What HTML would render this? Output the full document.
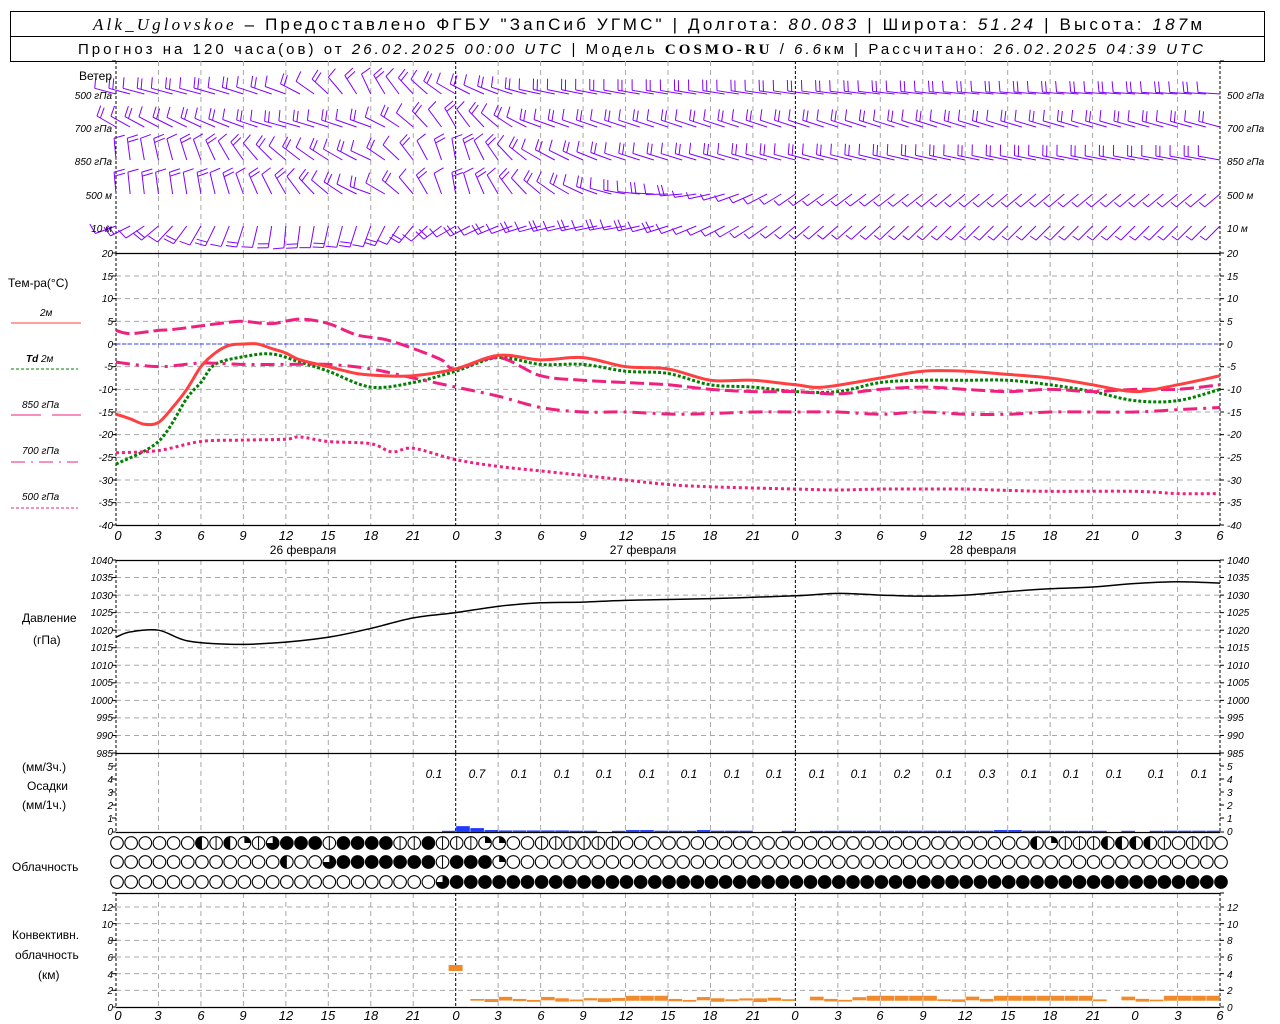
<!DOCTYPE html>
<html><head><meta charset="utf-8">
<style>
html,body{margin:0;padding:0;background:#fff;width:1280px;height:1024px;overflow:hidden}
svg{display:block}
text{font-family:"Liberation Sans",sans-serif;fill:#000}
.t{font-size:10px;font-style:italic}
.l{font-size:12px}
.e{text-anchor:end}
.m{text-anchor:middle}
.h{font-size:13px;font-style:italic;text-anchor:middle}
</style></head><body>
<svg id="s" width="1280" height="1024" viewBox="0 0 1280 1024" xmlns="http://www.w3.org/2000/svg">
<rect x="10.5" y="11.5" width="1254" height="50" fill="none" stroke="#000"/>
<line x1="10" y1="36.5" x2="1265" y2="36.5" stroke="#000"/>
<text x="93" y="30" font-size="17" textLength="1109" lengthAdjust="spacing"><tspan font-family="Liberation Serif" font-style="italic">Alk_Uglovskoe</tspan> – Предоставлено ФГБУ "ЗапСиб УГМС" | Долгота: <tspan font-style="italic">80.083</tspan> | Широта: <tspan font-style="italic">51.24</tspan> | Высота: <tspan font-style="italic">187</tspan>м</text>
<text x="78" y="54" font-size="15" textLength="1125" lengthAdjust="spacing">Прогноз на 120 часа(ов) от <tspan font-style="italic">26.02.2025 00:00 UTC</tspan>  | Модель <tspan font-family="Liberation Serif" font-weight="bold">COSMO-RU</tspan> / <tspan font-style="italic">6.6</tspan>км | Рассчитано: <tspan font-style="italic">26.02.2025 04:39 UTC</tspan></text>

<g id="g"></g>

<text class="l e" x="112" y="80">Ветер</text>
<text class="t e" x="112" y="99">500 гПа</text>
<text class="t e" x="112" y="132">700 гПа</text>
<text class="t e" x="112" y="165">850 гПа</text>
<text class="t e" x="112" y="199">500 м</text>
<text class="t e" x="112" y="232">10  м</text>
<text class="t" x="1227" y="99">500 гПа</text>
<text class="t" x="1227" y="132">700 гПа</text>
<text class="t" x="1227" y="165">850 гПа</text>
<text class="t" x="1227" y="199">500 м</text>
<text class="t" x="1227" y="232">10  м</text>

<text class="l" x="8" y="287">Тем-ра(°С)</text>
<text class="t" x="40" y="316" font-style="normal">2м</text>
<line x1="11" y1="323" x2="81" y2="323" stroke="#ff4040"/>
<text class="t" x="26" y="362"><tspan font-weight="bold">Td</tspan>  2м</text>
<line x1="11" y1="369" x2="78" y2="369" stroke="#008000" stroke-dasharray="3,2"/>
<text class="t" x="22" y="408">850 гПа</text>
<line x1="11" y1="415" x2="41" y2="415" stroke="#f0207f"/><line x1="52" y1="415" x2="81" y2="415" stroke="#f0207f"/>
<text class="t" x="22" y="454">700 гПа</text>
<line x1="11" y1="462" x2="78" y2="462" stroke="#f0207f" stroke-dasharray="14,6,2,6"/>
<text class="t" x="22" y="500">500 гПа</text>
<line x1="11" y1="508" x2="78" y2="508" stroke="#f0207f" stroke-dasharray="3,2"/>

<text class="t e" x="113" y="257">20</text><text class="t e" x="113" y="280">15</text><text class="t e" x="113" y="302">10</text><text class="t e" x="113" y="325">5</text><text class="t e" x="113" y="348">0</text><text class="t e" x="113" y="370">-5</text><text class="t e" x="113" y="393">-10</text><text class="t e" x="113" y="416">-15</text><text class="t e" x="113" y="438">-20</text><text class="t e" x="113" y="461">-25</text><text class="t e" x="113" y="484">-30</text><text class="t e" x="113" y="506">-35</text><text class="t e" x="113" y="529">-40</text>
<text class="t" x="1227" y="257">20</text><text class="t" x="1227" y="280">15</text><text class="t" x="1227" y="302">10</text><text class="t" x="1227" y="325">5</text><text class="t" x="1227" y="348">0</text><text class="t" x="1227" y="370">-5</text><text class="t" x="1227" y="393">-10</text><text class="t" x="1227" y="416">-15</text><text class="t" x="1227" y="438">-20</text><text class="t" x="1227" y="461">-25</text><text class="t" x="1227" y="484">-30</text><text class="t" x="1227" y="506">-35</text><text class="t" x="1227" y="529">-40</text>

<text class="h" x="118" y="540">0</text><text class="h" x="158" y="540">3</text><text class="h" x="201" y="540">6</text><text class="h" x="243" y="540">9</text><text class="h" x="286" y="540">12</text><text class="h" x="328" y="540">15</text><text class="h" x="371" y="540">18</text><text class="h" x="413" y="540">21</text><text class="h" x="456" y="540">0</text><text class="h" x="498" y="540">3</text><text class="h" x="541" y="540">6</text><text class="h" x="583" y="540">9</text><text class="h" x="626" y="540">12</text><text class="h" x="668" y="540">15</text><text class="h" x="710" y="540">18</text><text class="h" x="753" y="540">21</text><text class="h" x="795" y="540">0</text><text class="h" x="838" y="540">3</text><text class="h" x="880" y="540">6</text><text class="h" x="923" y="540">9</text><text class="h" x="965" y="540">12</text><text class="h" x="1008" y="540">15</text><text class="h" x="1050" y="540">18</text><text class="h" x="1093" y="540">21</text><text class="h" x="1135" y="540">0</text><text class="h" x="1178" y="540">3</text><text class="h" x="1220" y="540">6</text>
<text class="l m" x="303" y="554">26 февраля</text>
<text class="l m" x="643" y="554">27 февраля</text>
<text class="l m" x="983" y="554">28 февраля</text>

<text class="l" x="22" y="622">Давление</text>
<text class="l" x="33" y="644">(гПа)</text>
<text class="t e" x="113" y="564">1040</text><text class="t e" x="113" y="581">1035</text><text class="t e" x="113" y="599">1030</text><text class="t e" x="113" y="616">1025</text><text class="t e" x="113" y="634">1020</text><text class="t e" x="113" y="651">1015</text><text class="t e" x="113" y="669">1010</text><text class="t e" x="113" y="686">1005</text><text class="t e" x="113" y="704">1000</text><text class="t e" x="113" y="721">995</text><text class="t e" x="113" y="739">990</text><text class="t e" x="113" y="757">985</text>
<text class="t" x="1227" y="564">1040</text><text class="t" x="1227" y="581">1035</text><text class="t" x="1227" y="599">1030</text><text class="t" x="1227" y="616">1025</text><text class="t" x="1227" y="634">1020</text><text class="t" x="1227" y="651">1015</text><text class="t" x="1227" y="669">1010</text><text class="t" x="1227" y="686">1005</text><text class="t" x="1227" y="704">1000</text><text class="t" x="1227" y="721">995</text><text class="t" x="1227" y="739">990</text><text class="t" x="1227" y="757">985</text>

<text class="l" x="22" y="771">(мм/3ч.)</text>
<text class="l" x="27" y="790">Осадки</text>
<text class="l" x="22" y="809">(мм/1ч.)</text>
<text class="t e" x="113" y="770">5</text><text class="t e" x="113" y="783">4</text><text class="t e" x="113" y="796">3</text><text class="t e" x="113" y="809">2</text><text class="t e" x="113" y="822">1</text><text class="t e" x="113" y="835">0</text>
<text class="t" x="1227" y="770">5</text><text class="t" x="1227" y="783">4</text><text class="t" x="1227" y="796">3</text><text class="t" x="1227" y="809">2</text><text class="t" x="1227" y="822">1</text><text class="t" x="1227" y="835">0</text>
<g>
<text class="t m" style="font-size:12px" x="434" y="778">0.1</text><text class="t m" style="font-size:12px" x="477" y="778">0.7</text><text class="t m" style="font-size:12px" x="519" y="778">0.1</text><text class="t m" style="font-size:12px" x="562" y="778">0.1</text><text class="t m" style="font-size:12px" x="604" y="778">0.1</text><text class="t m" style="font-size:12px" x="647" y="778">0.1</text><text class="t m" style="font-size:12px" x="689" y="778">0.1</text><text class="t m" style="font-size:12px" x="732" y="778">0.1</text><text class="t m" style="font-size:12px" x="774" y="778">0.1</text><text class="t m" style="font-size:12px" x="817" y="778">0.1</text><text class="t m" style="font-size:12px" x="859" y="778">0.1</text><text class="t m" style="font-size:12px" x="902" y="778">0.2</text><text class="t m" style="font-size:12px" x="944" y="778">0.1</text><text class="t m" style="font-size:12px" x="987" y="778">0.3</text><text class="t m" style="font-size:12px" x="1029" y="778">0.1</text><text class="t m" style="font-size:12px" x="1071" y="778">0.1</text><text class="t m" style="font-size:12px" x="1114" y="778">0.1</text><text class="t m" style="font-size:12px" x="1156" y="778">0.1</text><text class="t m" style="font-size:12px" x="1199" y="778">0.1</text>
</g>
<text class="l" x="12" y="871">Облачность</text>

<text class="l" x="12" y="939">Конвективн.</text>
<text class="l" x="15" y="959">облачность</text>
<text class="l" x="38" y="979">(км)</text>
<text class="t e" x="113" y="911">12</text><text class="t e" x="113" y="928">10</text><text class="t e" x="113" y="944">8</text><text class="t e" x="113" y="961">6</text><text class="t e" x="113" y="978">4</text><text class="t e" x="113" y="994">2</text><text class="t e" x="113" y="1011">0</text>
<text class="t" x="1227" y="911">12</text><text class="t" x="1227" y="928">10</text><text class="t" x="1227" y="944">8</text><text class="t" x="1227" y="961">6</text><text class="t" x="1227" y="978">4</text><text class="t" x="1227" y="994">2</text><text class="t" x="1227" y="1011">0</text>

<text class="h" x="118" y="1020">0</text><text class="h" x="158" y="1020">3</text><text class="h" x="201" y="1020">6</text><text class="h" x="243" y="1020">9</text><text class="h" x="286" y="1020">12</text><text class="h" x="328" y="1020">15</text><text class="h" x="371" y="1020">18</text><text class="h" x="413" y="1020">21</text><text class="h" x="456" y="1020">0</text><text class="h" x="498" y="1020">3</text><text class="h" x="541" y="1020">6</text><text class="h" x="583" y="1020">9</text><text class="h" x="626" y="1020">12</text><text class="h" x="668" y="1020">15</text><text class="h" x="710" y="1020">18</text><text class="h" x="753" y="1020">21</text><text class="h" x="795" y="1020">0</text><text class="h" x="838" y="1020">3</text><text class="h" x="880" y="1020">6</text><text class="h" x="923" y="1020">9</text><text class="h" x="965" y="1020">12</text><text class="h" x="1008" y="1020">15</text><text class="h" x="1050" y="1020">18</text><text class="h" x="1093" y="1020">21</text><text class="h" x="1135" y="1020">0</text><text class="h" x="1178" y="1020">3</text><text class="h" x="1220" y="1020">6</text>
</svg>
<script>
(function(){
const NS='http://www.w3.org/2000/svg',g=document.getElementById('g');
function el(t,a){const e=document.createElementNS(NS,t);for(const k in a)e.setAttribute(k,a[k]);g.appendChild(e);return e;}
const X=h=>116+h*1104/78;
function ln(x1,y1,x2,y2,s,w,d){el('line',{x1:x1,y1:y1,x2:x2,y2:y2,stroke:s,'stroke-width':w||1,'stroke-dasharray':d||'none'});}
const panels=[[61,253],[253,525],[560,753],[753,832],[893,1007]];
for(let v=-35;v<=15;v+=5){const y=344-v*4.533;ln(116,y,1220,y,'#a8a8a8',1,'5,4');}
for(let p=990;p<=1035;p+=5){const y=753-(p-985)*193/55;ln(116,y,1220,y,'#a8a8a8',1,'5,4');}
for(let k=2;k<=12;k+=2){const y=1007-k*100/12;ln(116,y,1220,y,'#a8a8a8',1,'5,4');}
panels.forEach(([a,b])=>{
  for(let h=3;h<78;h+=3){if(h%24)ln(X(h),a,X(h),b,'#a8a8a8',1,'5,4');}
  [0,24,48,78].forEach(h=>ln(X(h),a,X(h),b,'#000',1,'3,2'));
  [a,b].forEach(y=>{ln(112,y,116,y,'#000');ln(1220,y,1224,y,'#000');});
});
for(let v=-35;v<=15;v+=5){const y=344-v*4.533;ln(112,y,116,y,'#000');ln(1220,y,1224,y,'#000');}
for(let p=990;p<=1035;p+=5){const y=753-(p-985)*193/55;ln(112,y,116,y,'#000');ln(1220,y,1224,y,'#000');}
for(let k=1;k<=5;k++){const y=831-k*13;ln(112,y,116,y,'#000');ln(1220,y,1224,y,'#000');}
for(let k=2;k<=12;k+=2){const y=1007-k*100/12;ln(112,y,116,y,'#000');ln(1220,y,1224,y,'#000');}
ln(116,344,1220,344,'#3040ff',1,'4,2');
[253,525,560,753,832,893,1007].forEach(y=>ln(116,y+.5,1220,y+.5,'#000',1.2));
function path(pts,f){let p=pts.map(([h,v])=>[X(h),f(v)]);let d='M'+p[0][0]+','+p[0][1];
 for(let i=0;i<p.length-1;i++){const p0=p[i-1]||p[i],p1=p[i],p2=p[i+1],p3=p[i+2]||p2;
  d+=' C'+(p1[0]+(p2[0]-p0[0])/6)+','+(p1[1]+(p2[1]-p0[1])/6)+' '+(p2[0]-(p3[0]-p1[0])/6)+','+(p2[1]-(p3[1]-p1[1])/6)+' '+p2[0]+','+p2[1];}
 return d;}
const T=v=>344-v*4.533, P=v=>753-(v-985)*193/55;
function curve(pts,f,c,w,d){el('path',{d:path(pts,f),fill:'none',stroke:c,'stroke-width':w,'stroke-dasharray':d||'none'});}
curve([[0,-26.5],[3,-21.5],[5,-12],[6,-8.5],[7,-4.5],[9,-2.8],[11,-2.2],[13,-4],[15,-6],[18,-9.5],[21,-8.5],[24,-6],[27,-3],[30,-4.5],[33,-4.5],[36,-6],[39,-6.5],[42,-9],[45,-9.5],[48,-10.5],[51,-10.5],[54,-8.5],[57,-8],[60,-8],[63,-8],[66,-9],[69,-10.5],[72,-12.5],[75,-12.5],[78,-10]],T,'#008000',3,'3,2');
curve([[0,3],[1,2.3],[3,3],[4,3.2],[6,4],[8,4.8],[9,5],[11,4.5],[13,5.5],[15,4.5],[17,2],[19,1],[21,-1],[23,-3.5],[24,-5.5],[27,-3],[30,-7],[33,-8],[36,-8.5],[39,-9],[42,-10],[45,-10.5],[48,-10.5],[51,-11],[54,-10],[57,-9.5],[60,-10],[63,-10.5],[66,-10],[69,-10.5],[72,-10],[75,-10],[78,-9]],T,'#f0207f',3,'14,5');
curve([[0,-4],[3,-5],[6,-4.2],[9,-4.5],[12,-4.5],[15,-4.5],[18,-5.5],[21,-7.5],[24,-9.5],[27,-11.5],[30,-14],[33,-15],[36,-15],[40,-15.5],[45,-15],[48,-15],[51,-15],[54,-15.5],[57,-15],[60,-15.5],[63,-15.5],[66,-15],[69,-15],[72,-15],[75,-14.5],[78,-14]],T,'#f0207f',3,'14,6,3,6');
curve([[0,-24],[3,-23.5],[6,-21.5],[9,-21.2],[12,-21],[13,-20.5],[15,-21.5],[18,-22],[19.5,-23.8],[21,-23],[24,-25.5],[27,-27],[30,-28],[33,-29],[36,-30],[39,-31],[42,-31.5],[48,-32],[51,-32.2],[54,-32],[57,-32],[60,-32],[63,-32.3],[66,-32.5],[72,-32.5],[75,-33],[78,-33]],T,'#f0207f',3,'3,3');
curve([[0,-15.5],[1,-16.5],[2,-17.7],[3,-17.3],[4,-14],[5,-10],[6,-5],[7,-2],[8,-0.3],[9,0],[10,0],[11,-1],[12,-2],[13,-3.5],[15,-5],[17,-6.5],[19,-7],[21,-7],[24,-5.5],[27,-2.5],[30,-3.5],[33,-3],[36,-5],[39,-5.5],[42,-8],[45,-8],[48,-9],[50,-9.5],[54,-7.5],[57,-6],[60,-6],[63,-6.7],[66,-7.5],[69,-9],[72,-10.5],[75,-9],[78,-7]],T,'#ff4040',3);
curve([[0,1018],[1,1019.5],[3,1020],[5,1017],[8,1016],[11,1016.3],[15,1018],[18,1020.5],[21,1023.5],[24,1025],[27,1026.8],[30,1027.8],[33,1028],[36,1028.5],[42,1029],[48,1029.8],[51,1030.5],[54,1030],[57,1029.7],[60,1030],[63,1031],[66,1031.8],[69,1032.3],[72,1033.3],[75,1033.8],[78,1033.4]],P,'#000',1.5);
// wind barbs (station at level, shaft pointing away)
const keys=[0,6,12,18,24,30,36,48,60,78];
const lv=[[94,[165,165,160,115,150,168,170,172,174,176]],[127,[150,155,165,160,120,160,162,162,163,165]],[160,[95,110,140,155,100,150,162,165,168,170]],[194,[95,100,120,160,100,140,170,215,220,220]],[226,[200,240,265,250,210,195,190,220,225,225]]];
function ia(arr,h){for(let i=0;i<keys.length-1;i++){if(h<=keys[i+1]){const t=(h-keys[i])/(keys[i+1]-keys[i]);return arr[i]+(arr[i+1]-arr[i])*t;}}return arr[arr.length-1];}
lv.forEach(([y,arr],li)=>{for(let h=0;h<=78;h++){const a=ia(arr,h)*Math.PI/180,x=X(h);const L=(li>=3&&h>46)?20:22;
 const x2=x+L*Math.cos(a),y2=y-L*Math.sin(a);ln(x,y,x2,y2,'#8000ff',1);
 const n=(li>=3&&h>40)?1:1+((h+li)%2);const b=a-80*Math.PI/180;const TL=(li>=3&&h>40)?7:11;
 for(let i=0;i<n;i++){const px=x2-i*4*Math.cos(a),py=y2+i*4*Math.sin(a);ln(px,py,px+TL*Math.cos(b),py-TL*Math.sin(b),'#8000ff',1);}}});
const pr={23:.05,24:.45,25:.3,26:.15,27:.12,28:.12,29:.12,30:.12,31:.12,32:.1,33:.1,35:.05,36:.15,37:.15,38:.1,39:.1,40:.08,41:.15,42:.1,43:.1,44:.1,47:.05,49:.05,50:.08,51:.1,52:.1,53:.1,54:.1,55:.1,56:.1,57:.1,58:.1,59:.1,60:.1,61:.1,62:.15,63:.15,64:.1,65:.1,66:.08,67:.05,68:.05,69:.05,71:.05,73:.05,74:.1,75:.1,76:.1,77:.1};
for(const h in pr){const v=Math.max(1.2,pr[h]*13);el('rect',{x:X(+h)+.5,y:832-v,width:13.6,height:v,fill:'#1e3cff'});}
el('rect',{x:X(23.5),y:965,width:14,height:6,fill:'#f08a2a'});
for(let h=25;h<78;h++){if(h==48||h==70)continue;const s=Math.sin(h*1.7)*.5+.5;let bot=0.7+Math.cos(h*2.3)*0.1,top=bot+0.2+s*0.25;
 if((h>=36&&h<=38)||(h>=53&&h<=57)||(h>=62&&h<=68)||h>=74){bot=0.75;top=1.35;}
 el('rect',{x:X(h)+.5,y:1007-top*100/12,width:13.6,height:(top-bot)*100/12,fill:'#f08a2a'});}
const r1='000000L2L1234442444422422211'+'00'+'222222'+'0'.repeat(29)+'L1222LLLL2022';
const r2='0'.repeat(12)+'L003'+'4444444'+'2'+'444'+'1'+'0'.repeat(51);
const r3='0'.repeat(23)+'3'+'4'.repeat(55);
[[843,r1],[862,r2],[882,r3]].forEach(([y,s])=>{for(let h=0;h<79;h++){const c=s[h]||'0',x=X(h)+1,r=6.3;
 el('circle',{cx:x,cy:y,r:r,fill:c=='4'?'#000':'#fff',stroke:'#000','stroke-width':1.1});
 if(c=='2')ln(x,y-r,x,y+r,'#000',1);
 if(c=='L')el('path',{d:`M${x},${y-r}A${r},${r} 0 0 0 ${x},${y+r}Z`,fill:'#000'});
 if(c=='1')el('path',{d:`M${x},${y}L${x},${y-r}A${r},${r} 0 0 1 ${x+r},${y}Z`,fill:'#000'});
 if(c=='3')el('path',{d:`M${x},${y}L${x},${y-r}A${r},${r} 0 1 1 ${x-r},${y}Z`,fill:'#000'});
}});
})();
</script>
</body></html>
